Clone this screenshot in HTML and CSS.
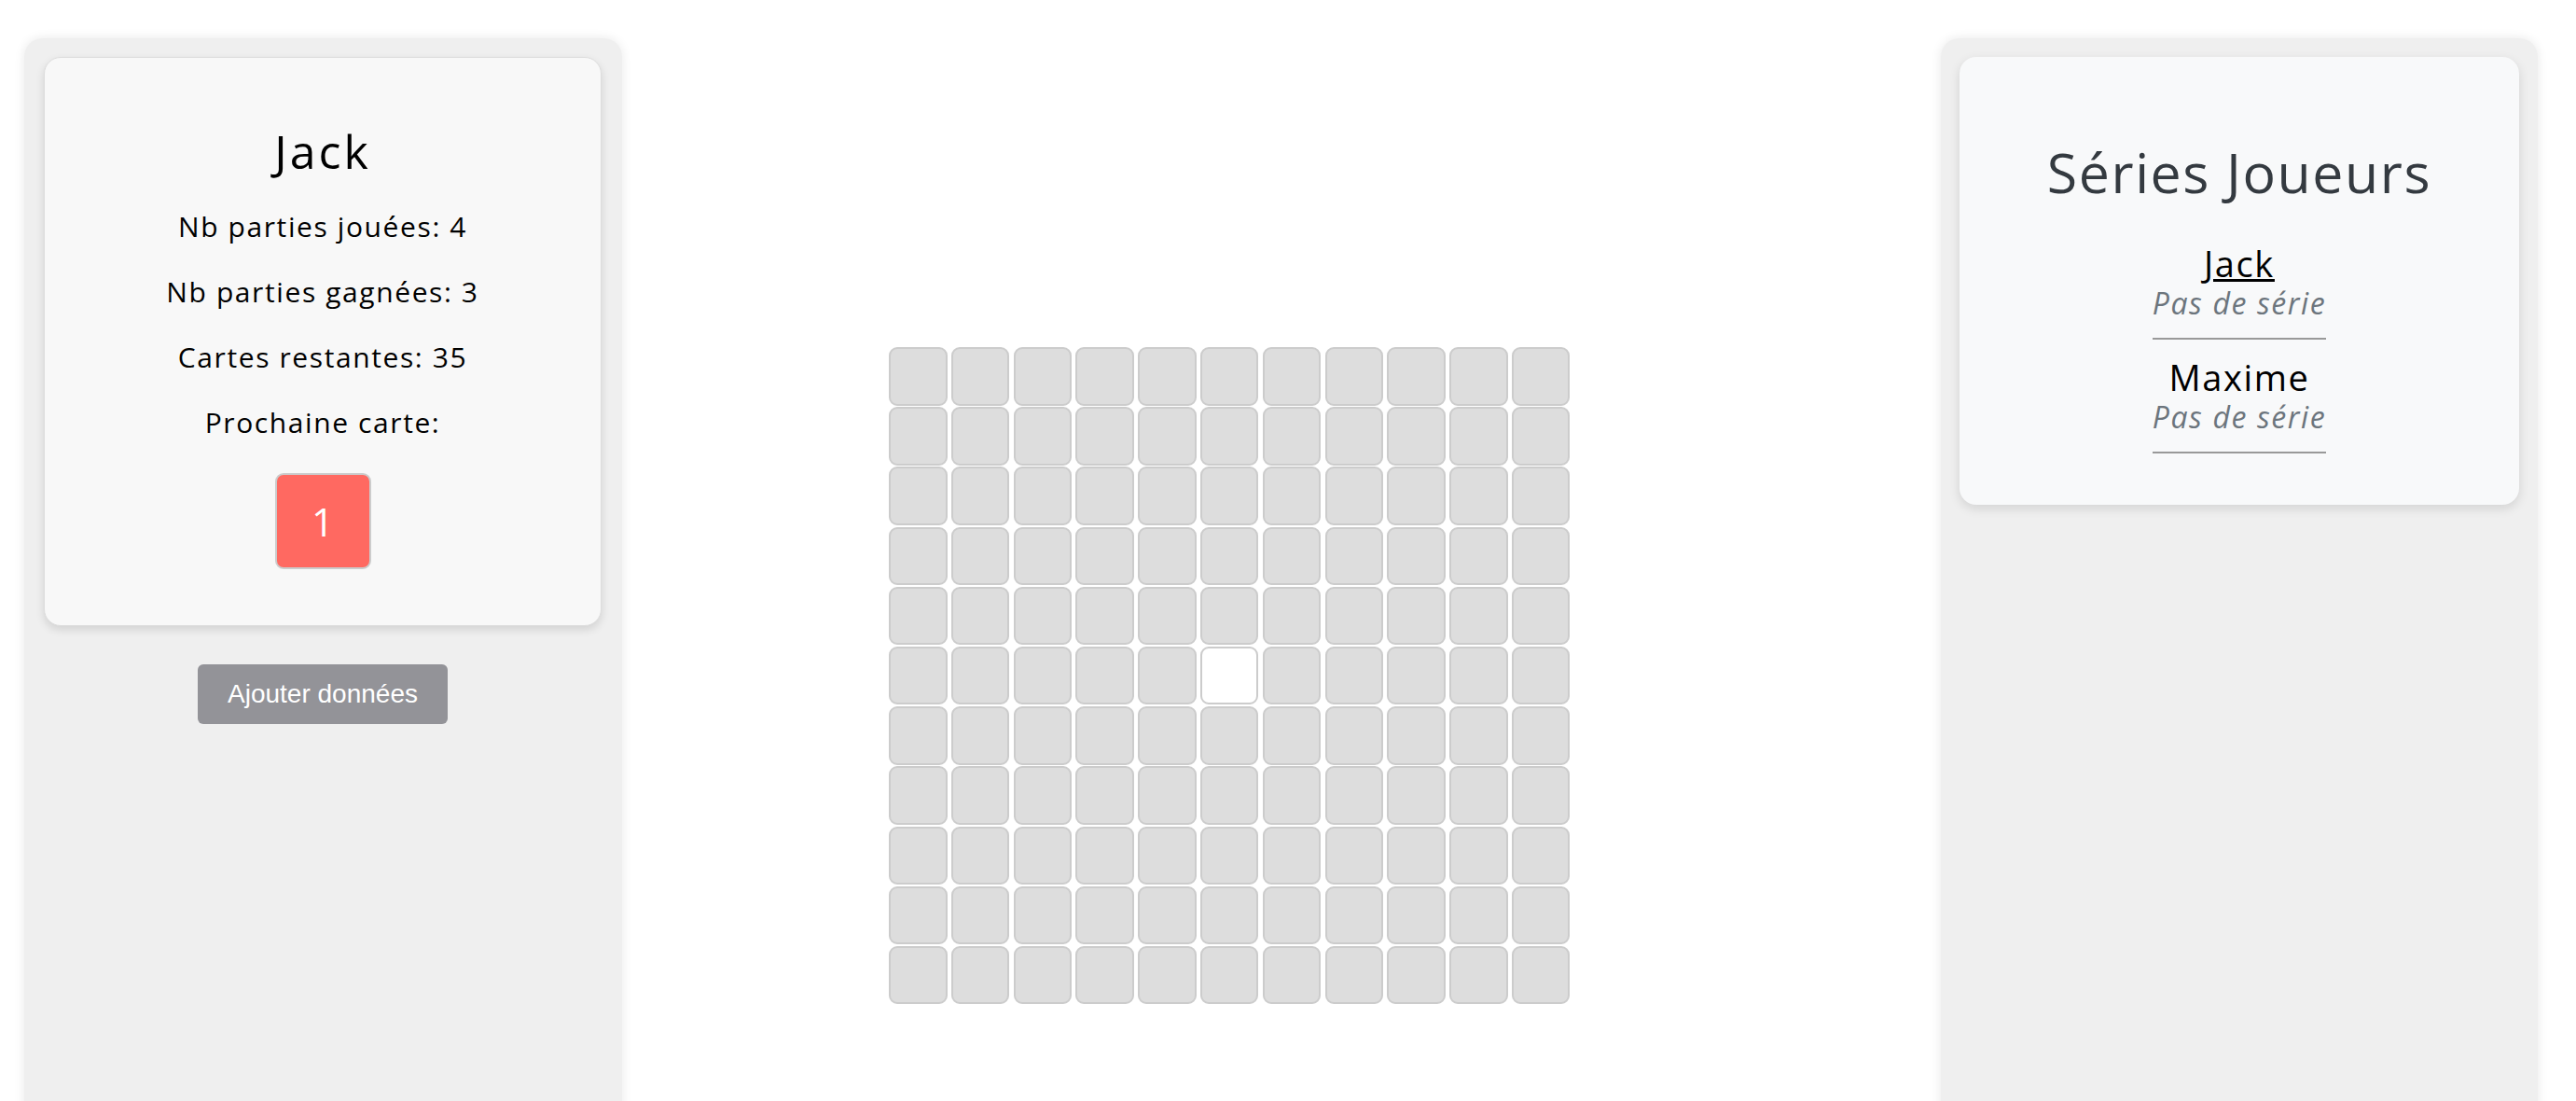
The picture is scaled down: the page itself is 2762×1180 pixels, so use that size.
FILE: index.html
```html
<!DOCTYPE html>
<html lang="fr">
	<head>
		<meta charset="utf-8">
		<title>Jeu de cartes</title>
		<link rel="stylesheet" href="styles.css">
	</head>
	<body>
		<div class="layout">
			<aside class="panel panel-left">
				<div class="player-card">
					<h4 class="player-name">Jack</h4>
					<p>Nb parties jouées: 4</p>
					<p>Nb parties gagnées: 3</p>
					<p>Cartes restantes: 35</p>
					<p>Prochaine carte:</p>
					<div class="next-card">1</div>
				</div>
				<button class="btn-add">Ajouter données</button>
			</aside>
			<main class="board-area">
				<div class="board">
					<div class="cell"></div><div class="cell"></div><div class="cell"></div><div class="cell"></div><div class="cell"></div><div class="cell"></div><div class="cell"></div><div class="cell"></div><div class="cell"></div><div class="cell"></div><div class="cell"></div>
					<div class="cell"></div><div class="cell"></div><div class="cell"></div><div class="cell"></div><div class="cell"></div><div class="cell"></div><div class="cell"></div><div class="cell"></div><div class="cell"></div><div class="cell"></div><div class="cell"></div>
					<div class="cell"></div><div class="cell"></div><div class="cell"></div><div class="cell"></div><div class="cell"></div><div class="cell"></div><div class="cell"></div><div class="cell"></div><div class="cell"></div><div class="cell"></div><div class="cell"></div>
					<div class="cell"></div><div class="cell"></div><div class="cell"></div><div class="cell"></div><div class="cell"></div><div class="cell"></div><div class="cell"></div><div class="cell"></div><div class="cell"></div><div class="cell"></div><div class="cell"></div>
					<div class="cell"></div><div class="cell"></div><div class="cell"></div><div class="cell"></div><div class="cell"></div><div class="cell"></div><div class="cell"></div><div class="cell"></div><div class="cell"></div><div class="cell"></div><div class="cell"></div>
					<div class="cell"></div><div class="cell"></div><div class="cell"></div><div class="cell"></div><div class="cell"></div><div class="cell cell-open"></div><div class="cell"></div><div class="cell"></div><div class="cell"></div><div class="cell"></div><div class="cell"></div>
					<div class="cell"></div><div class="cell"></div><div class="cell"></div><div class="cell"></div><div class="cell"></div><div class="cell"></div><div class="cell"></div><div class="cell"></div><div class="cell"></div><div class="cell"></div><div class="cell"></div>
					<div class="cell"></div><div class="cell"></div><div class="cell"></div><div class="cell"></div><div class="cell"></div><div class="cell"></div><div class="cell"></div><div class="cell"></div><div class="cell"></div><div class="cell"></div><div class="cell"></div>
					<div class="cell"></div><div class="cell"></div><div class="cell"></div><div class="cell"></div><div class="cell"></div><div class="cell"></div><div class="cell"></div><div class="cell"></div><div class="cell"></div><div class="cell"></div><div class="cell"></div>
					<div class="cell"></div><div class="cell"></div><div class="cell"></div><div class="cell"></div><div class="cell"></div><div class="cell"></div><div class="cell"></div><div class="cell"></div><div class="cell"></div><div class="cell"></div><div class="cell"></div>
					<div class="cell"></div><div class="cell"></div><div class="cell"></div><div class="cell"></div><div class="cell"></div><div class="cell"></div><div class="cell"></div><div class="cell"></div><div class="cell"></div><div class="cell"></div><div class="cell"></div>
				</div>
			</main>
			<aside class="panel panel-right">
				<div class="streak-card">
					<h2 class="streak-title">Séries Joueurs</h2>
					<div class="streak">
						<a class="streak-name streak-link" href="#">Jack</a>
						<span class="streak-value">Pas de série</span>
					</div>
					<div class="streak">
						<span class="streak-name">Maxime</span>
						<span class="streak-value">Pas de série</span>
					</div>
				</div>
			</aside>
		</div>
	</body>
</html>
```

FILE: styles.css
```css
/*   #efefef; /*panel gray*/
/*   #ddd;    /*empty cell*/
/*   #ff6961; /*card red*/
body{
	margin:0;
	font-family: "Open Sans", "DejaVu Sans", sans-serif;
	letter-spacing: 0.1em;
	color:#000;
	background-color:#fff;
}
.layout{
	display:flex;
	height:100vh;
	overflow:hidden;
	box-sizing:border-box;
	padding:41px 41px 0px 26px;
}
.panel{
	background-color:#efefef; /*panel gray*/
	border-radius:20px;
	box-shadow:0px 0px 12px rgba(0,0,0,0.09);
	padding:20px;
	margin-bottom:-40px;
	box-sizing:border-box;
}
.panel-left{
	width:641px;
	padding:20px 22px 20px 21px;
	display:flex;
	flex-direction:column;
	align-items:center;
}
.panel-right{
	width:640px;
}

/* player card */
.player-card{
	align-self:stretch;
	background-color:#f8f8f8;
	border:1px solid #ddd;
	border-radius:18px;
	box-shadow:0px 4px 10px rgba(0,0,0,0.12);
	padding:74px 20px 60px;
	text-align:center;
}
.player-name{
	font-size:50px;
	font-weight:normal;
	line-height:52px;
	letter-spacing:0.06em;
	margin:0px 0px 34px;
}
.player-card p{
	font-size:30px;
	line-height:42px;
	margin:0px 0px 28px;
}
.next-card{
	width:103px;
	height:103px;
	box-sizing:border-box;
	margin:33px auto 0px;
	background-color:#ff6961; /*card red*/
	border:2px solid #ccc;
	border-radius:9px;
	color:#fff;
	font-size:42px;
	font-weight:500;
	display:flex;
	align-items:center;
	justify-content:center;
	letter-spacing:0;
}
.btn-add{
	margin-top:41px;
	width:268px;
	height:64px;
	border:none;
	border-radius:6px;
	background-color:#939398;
	color:#fff;
	font-family:"Liberation Sans", Arial, sans-serif;
	font-size:28px;
	letter-spacing:0;
}

/* board */
.board-area{
	flex:1;
}
.board{
	display:grid;
	grid-template-columns:repeat(11, 62.5px);
	grid-auto-rows:62.5px;
	column-gap:4.3px;
	row-gap:1.7px;
	margin:331px 0px 0px 286px;
	width:max-content;
}
.cell{
	background-color:#ddd; /*empty cell*/
	border:2px solid #ccc;
	border-radius:9px;
	box-sizing:border-box;
}
.cell-open{
	background-color:#fff;
}

/* streaks */
.streak-card{
	background-color:#f8f9fa;
	border-radius:18px;
	box-shadow:0px 4px 12px rgba(0,0,0,0.12);
	padding:90px 20px 37px;
	display:flex;
	flex-direction:column;
	align-items:center;
	text-align:center;
}
.streak-title{
	font-size:59px;
	font-weight:normal;
	line-height:67px;
	color:#343a40;
	margin:0px 0px 42px;
}
.streak{
	display:flex;
	flex-direction:column;
	align-items:center;
	border-bottom:2px solid #999;
	padding-bottom:16px;
	margin-bottom:18px;
}
.streak-name{
	font-size:38px;
	line-height:44px;
	color:#000;
	text-decoration:none;
}
.streak-link{
	text-decoration:underline;
}
.streak-value{
	font-size:32px;
	line-height:42px;
	font-style:italic;
	color:#6c757d;
}
```
